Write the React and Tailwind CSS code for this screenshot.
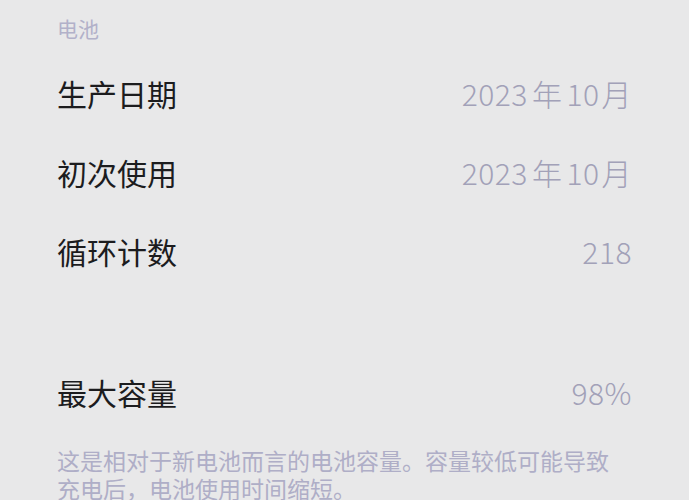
export default function App() {
  const rows = [
    { label: "生产日期", value: ["2023", "年", "10", "月"] },
    { label: "初次使用", value: ["2023", "年", "10", "月"] },
    { label: "循环计数", value: ["218"] },
  ];

  // CJK glyphs sit with a little air around the digits
  const gap = { 年: "mx-[4px]", 月: "ml-[2px]" };

  return (
    <div
      className="h-[500px] w-[689px] overflow-hidden bg-[#e8e8e9] px-[57px]"
      style={{ fontFamily: '"Noto Sans CJK SC", "Noto Sans", sans-serif' }}
    >
      <div className="h-[54px] pt-[14px] text-[21px] leading-[28px] text-[#b2b1c9]">电池</div>

      {rows.map((r, i) => (
        <div key={i} className="flex h-[79px] items-center justify-between">
          <span className="text-[30px] text-[#1c1c1e]">{r.label}</span>
          <span className="flex items-center text-[30px] font-light tracking-[0.5px] text-[#a2a1b8]">
            {r.value.map((part, j) => (
              <span key={j} className={gap[part] || ""}>
                {part}
              </span>
            ))}
          </span>
        </div>
      ))}

      <div className="h-[62px]" />

      <div className="flex h-[79px] items-center justify-between">
        <span className="text-[30px] text-[#1c1c1e]">最大容量</span>
        <span className="text-[30px] font-light tracking-[0.5px] text-[#a2a1b8]">98%</span>
      </div>

      <p className="mt-[14px] text-[23px] leading-[28px] text-[#afaec7]">
        这是相对于新电池而言的电池容量。容量较低可能导致
        <br />
        充电后，电池使用时间缩短。
      </p>
    </div>
  );
}
